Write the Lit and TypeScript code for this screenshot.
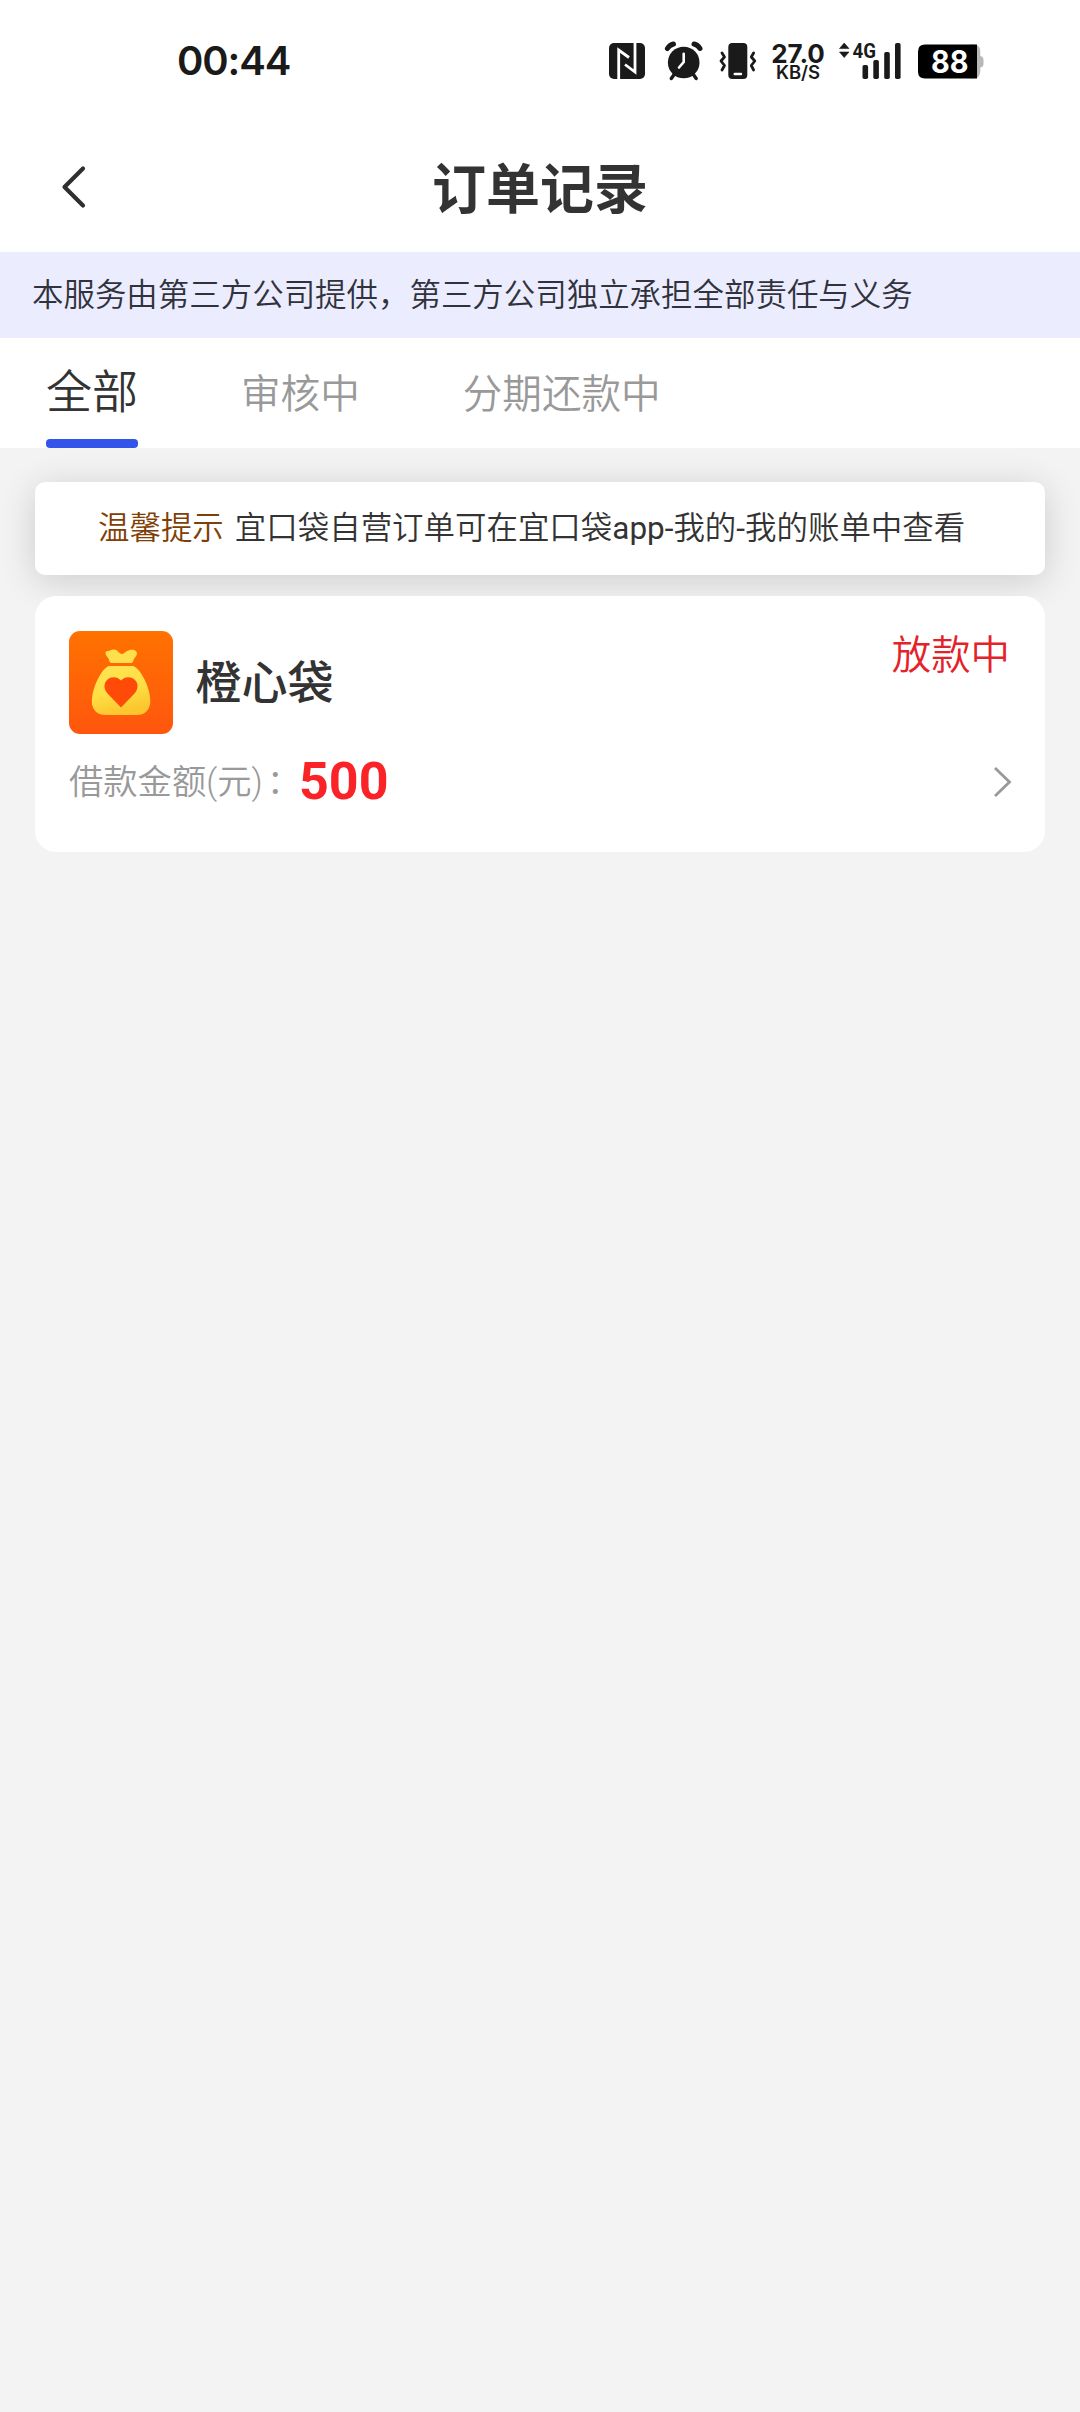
import { LitElement, html, css, svg } from "lit";
import { customElement, property, state } from "lit/decorators.js";
import { classMap } from "lit/directives/class-map.js";

const SIGNAL_BARS = [
  { x: 23.5, y: 22, h: 14 },
  { x: 34.3, y: 17, h: 19 },
  { x: 45.2, y: 9, h: 27 },
  { x: 56, y: 0, h: 36 },
];

@customElement("status-bar")
class StatusBar extends LitElement {
  static styles = css`
    :host {
      display: flex;
      align-items: center;
      height: 122px;
      box-sizing: border-box;
      padding: 0 96px 0 177px;
      color: #1a1a1a;
      font-family: Inter, "Noto Sans", sans-serif;
    }
    .time {
      flex: 1;
      font-size: 40px;
      line-height: 48px;
      font-weight: 600;
      letter-spacing: -1.1px;
    }
    svg {
      display: block;
      flex: none;
      overflow: visible;
    }
    .nfc { margin-right: 19px; }
    .alarm { margin-right: 16px; }
    .vibrate { margin-right: 12px; }
    .signal { margin-right: 16px; }
    .rate {
      width: 58px;
      margin-right: 12px;
      display: flex;
      flex-direction: column;
      align-items: center;
      white-space: nowrap;
    }
    .speed {
      font-size: 26px;
      line-height: 22px;
      font-weight: 700;
    }
    .unit {
      font-size: 18.5px;
      line-height: 15px;
      font-weight: 600;
    }
    .label {
      font-family: Roboto, sans-serif;
      font-weight: 700;
      font-size: 20.5px;
    }
    .charge {
      font-family: Inter, sans-serif;
      font-weight: 700;
      font-size: 31px;
    }
  `;

  render() {
    return html`
      <span class="time">00:44</span>
      <svg class="nfc" width="37" height="38" viewBox="0 0 37 38">
        <rect x="0" y="1" width="36" height="36" rx="5" fill="#1a1a1a" />
        <path d="M9.700 37.500V8L20 15.500M26 0.500V30L16 22.500" fill="none" stroke="#fff" stroke-width="2.8" />
      </svg>
      <svg class="alarm" width="38" height="38" viewBox="0 0 38 38">
        <circle cx="18.7" cy="20.5" r="15.8" fill="#1a1a1a" />
        <path d="M2.400 6.500Q4.500 3 8.500 2M29 2Q33 3 35 6.500" fill="none" stroke="#1a1a1a" stroke-width="5" stroke-linecap="round" />
        <path d="M9.500 32L6.300 36.500M28 32L31.200 36.500" fill="none" stroke="#1a1a1a" stroke-width="3.4" stroke-linecap="round" />
        <path d="M18.700 11.700V20L14 25.500" fill="none" stroke="#fff" stroke-width="2.6" stroke-linecap="round" />
      </svg>
      <svg class="vibrate" width="38" height="38" viewBox="0 0 38 38">
        <rect x="9.3" y="1" width="19" height="36" rx="4" fill="#1a1a1a" />
        <path d="M15.700 32H22" stroke="#fff" stroke-width="2.4" stroke-linecap="round" />
        <path d="M3 11L5.500 15L2 19L5.500 23.500L3 28M34.600 11L32.300 15L35.800 19L32.300 23.500L34.600 28" fill="none" stroke="#1a1a1a" stroke-width="2.8" stroke-linecap="round" stroke-linejoin="round" />
      </svg>
      <div class="rate">
        <span class="speed">27.0</span>
        <span class="unit">KB/S</span>
      </div>
      <svg class="signal" width="63" height="38" viewBox="0 -1 63 38">
        <path d="M0.500 5.600L5.200 0L10 5.600ZM0.500 9L5.200 14.600L10 9Z" fill="#1a1a1a" stroke="#1a1a1a" stroke-width="0.6" stroke-linejoin="round" />
        <text class="label" x="13.5" y="14.6" textLength="23.5" lengthAdjust="spacingAndGlyphs" fill="#1a1a1a">4G</text>
        ${SIGNAL_BARS.map((b) => svg`<rect x=${b.x} y=${b.y} width="5.6" height=${b.h} rx="1.8" fill="#1a1a1a" />`)}
      </svg>
      <svg class="battery" width="66" height="38" viewBox="0 -1 66 38">
        <path d="M52 1.500H56Q62 1.500 62.300 8V13Q65.500 13.500 65.500 17V21Q65.500 24 62.300 24.500V28Q62 35.500 56 35.500H52Z" fill="#b8b8b8" />
        <path d="M7 1.500H59V35.500H7Q0 35.500 0 28.500V8.500Q0 1.500 7 1.500Z" fill="#000" />
        <text class="charge" x="13" y="30" textLength="37.5" lengthAdjust="spacingAndGlyphs" fill="#fff">88</text>
      </svg>
    `;
  }
}

@customElement("nav-header")
class NavHeader extends LitElement {
  @property() heading = "";

  static styles = css`
    :host {
      display: grid;
      grid-template-columns: 120px 1fr 120px;
      align-items: center;
      height: 130px;
    }
    .back {
      display: block;
      margin-left: 60px;
    }
    .title {
      margin: 0;
      padding-top: 8px;
      text-align: center;
      font-size: 54px;
      line-height: 80px;
      font-weight: 700;
      color: #333;
    }
  `;

  render() {
    return html`
      <svg class="back" width="28" height="46" viewBox="0 0 28 46">
        <path d="M23 4.500L4.500 23L23 41.500" fill="none" stroke="#2f2f2f" stroke-width="4.2" stroke-linecap="round" stroke-linejoin="round" />
      </svg>
      <h1 class="title">${this.heading}</h1>
    `;
  }
}

@customElement("order-card")
class OrderCard extends LitElement {
  @property() name = "";
  @property() status = "";
  @property() amount = "";

  static styles = css`
    :host {
      display: flex;
      flex-direction: column;
      height: 256px;
      box-sizing: border-box;
      padding: 35px 33px 0 34px;
      border-radius: 21px;
      background: #fff;
      position: relative;
    }
    .head {
      display: flex;
      height: 104px;
    }
    .logo {
      display: block;
      flex: none;
    }
    .name {
      flex: 1;
      padding-left: 22.5px;
      font-size: 46px;
      line-height: 104px;
      font-weight: 500;
      color: #333;
    }
    .status {
      margin-right: 2px;
      font-size: 39.4px;
      line-height: 49px;
      color: #e5222a;
    }
    .detail {
      display: flex;
      align-items: center;
      height: 94px;
    }
    .label {
      font-size: 34.3px;
      line-height: 50px;
      color: #999;
      width: 230px;
      white-space: nowrap;
    }
    .colon {
      margin-left: 4px;
    }
    .amount {
      flex: 1;
      font-family: Roboto, sans-serif;
      font-weight: 700;
      font-size: 52px;
      line-height: 60px;
      color: #fa2328;
    }
  `;

  render() {
    return html`
      <div class="head">
        <svg class="logo" width="104" height="103" viewBox="0 0 104 103">
          <defs>
            <linearGradient id="tile" x1="0" y1="0" x2="0" y2="1">
              <stop offset="0" stop-color="#ff7200" />
              <stop offset="1" stop-color="#ff560e" />
            </linearGradient>
            <linearGradient id="bag" x1="0" y1="0" x2="0.3" y2="1">
              <stop offset="0" stop-color="#ffe352" />
              <stop offset="0.6" stop-color="#ffdf43" />
              <stop offset="1" stop-color="#fcc62f" />
            </linearGradient>
          </defs>
          <rect width="104" height="103" rx="11" fill="url(#tile)" />
          <path d="M36.500 22.500C36 19.500 39 20.500 41 19.500C44 17.800 47.500 18.200 49.500 21Q52 24 55 22.300C57 21 57.500 19.500 60 19.200C64 17.800 69 19.500 67.800 23.500C67 26 65.500 26.500 64.500 29Q64 32 62 32H42.500Q40.500 32 40 28.500C39.500 26.500 37 25.500 36.500 22.500Z" fill="#ffe04c" />
          <path d="M40 35H64C71 37 81.500 56 81.300 71C81 79.500 75 84 68 84H36.500C29 84 23 79.500 22.800 71C22.800 56 33 37 40 35Z" fill="url(#bag)" />
          <path d="M52 76.500L38.500 62.500C34.500 58 34.500 52 38.500 48.500C42.500 45 48.500 45.500 52 49.500C55.500 45.500 61.500 45 65.500 48.500C69.500 52 69.500 58 65.500 62.500Z" fill="#ff4a08" />
        </svg>
        <span class="name">${this.name}</span>
        <span class="status">${this.status}</span>
      </div>
      <div class="detail">
        <span class="label">借款金额(元)<span class="colon">：</span></span>
        <span class="amount">${this.amount}</span>
        <svg width="19" height="32" viewBox="0 0 19 32">
          <path d="M2 2L16.500 16L2 30" fill="none" stroke="#999" stroke-width="2.8" />
        </svg>
      </div>
    `;
  }
}

@customElement("app-root")
class AppRoot extends LitElement {
  @state() private active = 0;

  private tabs = ["全部", "审核中", "分期还款中"];

  static styles = css`
    :host {
      display: flex;
      flex-direction: column;
      width: 1080px;
      height: 2412px;
      overflow: hidden;
      background: #f3f3f3;
      color: #333;
      font-family: Roboto, "Noto Sans CJK SC", sans-serif;
      font-weight: 350;
    }
    .top {
      background: #fff;
      position: relative;
      z-index: 1;
    }
    .banner {
      height: 86px;
      padding-left: 32px;
      background: #ebecfd;
      font-size: 31.46px;
      line-height: 88px;
      color: #30323c;
      white-space: nowrap;
    }
    .tabs {
      display: flex;
      gap: 103px;
      height: 110px;
      padding-left: 46px;
    }
    .tab {
      display: flex;
      flex-direction: column;
      font-size: 39.6px;
      line-height: 113px;
      color: #999;
      cursor: pointer;
    }
    .tab.active {
      font-size: 46px;
      line-height: 109px;
      color: #333;
      height: 110px;
    }
    .tab.active::after {
      content: "";
      height: 9px;
      flex: none;
      margin-top: -8px;
      border-radius: 4px;
      background: #3254eb;
    }
    .list {
      display: flex;
      flex-direction: column;
      gap: 21px;
      padding: 34px 35px 0;
    }
    .notice {
      display: flex;
      gap: 11px;
      height: 93px;
      box-sizing: border-box;
      padding-left: 63px;
      border-radius: 10px;
      background: #fff;
      box-shadow: 0 6px 36px rgba(0, 0, 0, 0.16);
      font-size: 31.46px;
      line-height: 93px;
      white-space: nowrap;
    }
    .tip {
      color: #803f06;
    }
    .latin {
      font-weight: 400;
    }
  `;

  render() {
    return html`
      <div class="top">
        <status-bar></status-bar>
        <nav-header heading="订单记录"></nav-header>
        <div class="banner">本服务由第三方公司提供，第三方公司独立承担全部责任与义务</div>
        <div class="tabs">
          ${this.tabs.map(
            (t, i) => html`<div class=${classMap({ tab: true, active: i === this.active })} @click=${() => (this.active = i)}>${t}</div>`
          )}
        </div>
      </div>
      <div class="list">
        <div class="notice">
          <span class="tip">温馨提示</span>
          <span>宜口袋自营订单可在宜口袋<span class="latin">app-</span>我的<span class="latin">-</span>我的账单中查看</span>
        </div>
        <order-card name="橙心袋" status="放款中" amount="500"></order-card>
      </div>
    `;
  }
}
